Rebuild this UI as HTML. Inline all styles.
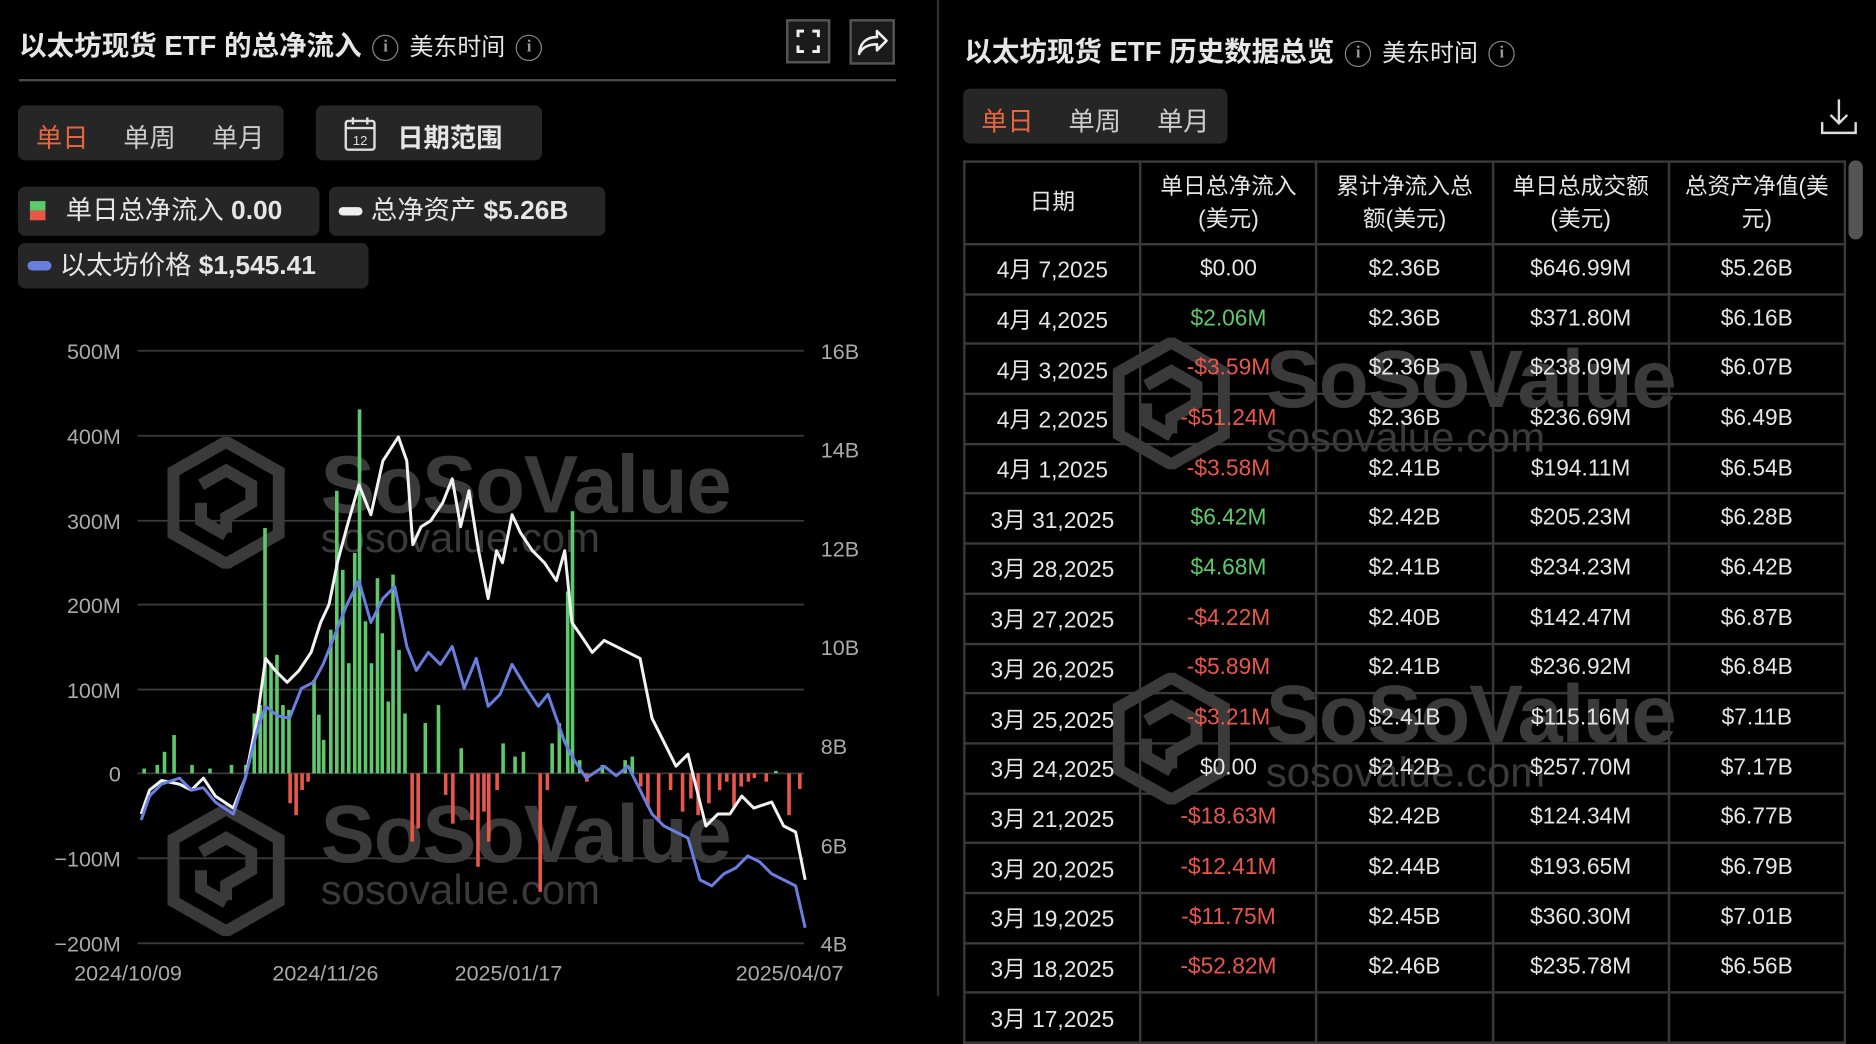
<!DOCTYPE html>
<html><head><meta charset="utf-8"><style>
html,body{margin:0;padding:0;background:#000;overflow:hidden}
body{width:1876px;height:996px}
#w{position:absolute;left:0;top:0;width:1568px;height:832px;transform:scale(1.19643,1.19712);transform-origin:0 0;font-family:"Liberation Sans","Noto Sans CJK SC",sans-serif;color:#e6e6e6}
.a{position:absolute;white-space:nowrap}
.seg{position:absolute;background:#262626;border-radius:6px}
.chip{position:absolute;background:#262626;border-radius:6px;font-size:22px;line-height:40px}
.info{display:inline-block;width:20px;height:20px;border:1.5px solid #888;border-radius:50%;font-size:14px;line-height:20px;text-align:center;color:#999;vertical-align:middle;font-family:"Liberation Serif",serif;margin:0 9px}
table{position:absolute;left:805px;top:134px;border-collapse:collapse;font-size:19px;color:#e6e6e6;table-layout:fixed;width:738px}
td{border:2px solid #3a3a3a;text-align:center;height:39.7px;padding:0}
th{border:2px solid #3a3a3a;font-weight:normal;height:67px;line-height:27px;padding:0;font-size:19px;overflow:hidden}
.g{color:#5ec96a}.r{color:#e8574a}
.wm{position:absolute;color:#3a3a3a;font-weight:bold;font-size:68px;letter-spacing:-1px}
.wm2{position:absolute;color:#3a3a3a;font-size:35px}
</style></head><body><div id="w">
<div class="a" style="left:16px;top:19px;font-size:23px;font-weight:bold">以太坊现货 ETF 的总净流入<span class="info">i</span><span style="font-weight:normal;font-size:20px">美东时间</span><span class="info">i</span></div>
<div class="a" style="left:657px;top:16px;width:37px;height:37px;border:2px solid #555;box-sizing:border-box;background:#1a1a1a">
<svg width="33" height="33" viewBox="0 0 33 33"><path d="M8 13V8h5M20 8h5v5M25 20v5h-5M13 25H8v-5" stroke="#eee" stroke-width="2.5" fill="none"/></svg></div>
<div class="a" style="left:710px;top:16px;width:38px;height:38px;border:2px solid #555;box-sizing:border-box;background:#1a1a1a">
<svg width="34" height="34" viewBox="0 0 34 34"><path d="M6 27C7 17 13 13 21 13V8l8 8-8 8v-5C14 19 9 21 6 27Z" stroke="#eee" stroke-width="2.2" fill="none" stroke-linejoin="round"/></svg></div>
<div class="a" style="left:16px;top:66px;width:733px;height:2px;background:#4a4a4a"></div>
<div class="seg" style="left:15px;top:88px;width:222px;height:46px"></div>
<div class="a" style="left:30px;top:98px;font-size:22px;color:#e8663d">单日</div>
<div class="a" style="left:103px;top:98px;font-size:22px;color:#ccc">单周</div>
<div class="a" style="left:177px;top:98px;font-size:22px;color:#ccc">单月</div>
<div class="seg" style="left:264px;top:88px;width:189px;height:46px"></div>
<svg class="a" style="left:286px;top:96px" width="30" height="32" viewBox="0 0 30 32"><rect x="3" y="5" width="24" height="24" rx="2" fill="none" stroke="#ddd" stroke-width="2"/><path d="M3 11h24M9 2v6M21 2v6" stroke="#ddd" stroke-width="2"/><text x="15" y="25" font-size="11" fill="#ddd" text-anchor="middle" font-family="Liberation Sans">12</text></svg>
<div class="a" style="left:332px;top:98px;font-size:22px;font-weight:bold">日期范围</div>
<div class="chip" style="left:15px;top:156px;width:252px;height:41px"><span style="position:absolute;left:10px;top:12px;width:13px;height:8px;background:#5ec96a"></span><span style="position:absolute;left:10px;top:20px;width:13px;height:8px;background:#e8574a"></span><span style="position:absolute;left:40px">单日总净流入 <b>0.00</b></span></div>
<div class="chip" style="left:275px;top:156px;width:231px;height:41px"><span style="position:absolute;left:8px;top:17px;width:20px;height:7px;border-radius:4px;background:#eee"></span><span style="position:absolute;left:35px">总净资产 <b>$5.26B</b></span></div>
<div class="chip" style="left:15px;top:203px;width:293px;height:38px;line-height:38px"><span style="position:absolute;left:8px;top:15px;width:20px;height:8px;border-radius:4px;background:#6a7ee0"></span><span style="position:absolute;left:35px">以太坊价格 <b>$1,545.41</b></span></div>
<svg class="a" style="left:140px;top:365px" width="98" height="110" viewBox="0 0 98 110"><path d="M49 4L93 29V81L49 106L5 81V29Z" fill="none" stroke="#3a3a3a" stroke-width="10"/><path d="M28 40L49 28L70 40V55L49 67V80M28 55V70L49 82" fill="none" stroke="#3a3a3a" stroke-width="10"/></svg>
<div class="wm" style="left:268px;top:366px">SoSoValue</div>
<div class="wm2" style="left:268px;top:430px">sosovalue.com</div>
<svg class="a" style="left:140px;top:672px" width="98" height="110" viewBox="0 0 98 110"><path d="M49 4L93 29V81L49 106L5 81V29Z" fill="none" stroke="#3a3a3a" stroke-width="10"/><path d="M28 40L49 28L70 40V55L49 67V80M28 55V70L49 82" fill="none" stroke="#3a3a3a" stroke-width="10"/></svg>
<div class="wm" style="left:268px;top:658px">SoSoValue</div>
<div class="wm2" style="left:268px;top:724px">sosovalue.com</div>
<svg class="a" style="left:0;top:0" width="780" height="832" font-family="Liberation Sans" font-size="18" fill="#aaa">
<g stroke="#3a3a3a" stroke-width="1.5"><line x1="115" x2="672" y1="293" y2="293"/><line x1="115" x2="672" y1="364" y2="364"/><line x1="115" x2="672" y1="435" y2="435"/><line x1="115" x2="672" y1="505" y2="505"/><line x1="115" x2="672" y1="576" y2="576"/><line x1="115" x2="672" y1="646" y2="646"/><line x1="115" x2="672" y1="717" y2="717"/><line x1="115" x2="672" y1="788" y2="788"/></g>
<g text-anchor="end"><text x="101" y="300">500M</text><text x="101" y="371">400M</text><text x="101" y="442">300M</text><text x="101" y="512">200M</text><text x="101" y="583">100M</text><text x="101" y="653">0</text><text x="101" y="724">−100M</text><text x="101" y="795">−200M</text></g>
<g><text x="686" y="300">16B</text><text x="686" y="382">14B</text><text x="686" y="465">12B</text><text x="686" y="547">10B</text><text x="686" y="630">8B</text><text x="686" y="713">6B</text><text x="686" y="795">4B</text></g>
<g text-anchor="middle"><text x="107" y="819">2024/10/09</text><text x="272" y="819">2024/11/26</text><text x="425" y="819">2025/01/17</text><text x="660" y="819">2025/04/07</text></g>
<g fill="#5ec96a">
<rect x="119" y="642" width="3" height="4"/><rect x="130" y="639" width="3" height="7"/><rect x="136" y="628" width="3" height="18"/><rect x="144" y="614" width="3" height="32"/><rect x="159" y="639" width="3" height="7"/><rect x="174" y="642" width="3" height="4"/><rect x="192" y="639" width="3" height="7"/><rect x="204" y="639" width="3" height="7"/><rect x="211" y="596" width="3" height="50"/><rect x="216" y="589" width="3" height="57"/><rect x="220" y="441" width="3" height="205"/><rect x="225" y="554" width="3" height="92"/><rect x="230" y="547" width="3" height="99"/><rect x="235" y="589" width="3" height="57"/><rect x="240" y="593" width="3" height="53"/><rect x="261" y="568" width="3" height="78"/><rect x="265" y="597" width="3" height="49"/><rect x="269" y="618" width="3" height="28"/><rect x="275" y="526" width="3" height="120"/><rect x="280" y="410" width="3" height="236"/><rect x="285" y="476" width="3" height="170"/><rect x="290" y="554" width="3" height="92"/><rect x="295" y="462" width="3" height="184"/><rect x="299" y="342" width="3" height="304"/><rect x="304" y="519" width="3" height="127"/><rect x="309" y="554" width="3" height="92"/><rect x="314" y="483" width="3" height="163"/><rect x="318" y="529" width="3" height="117"/><rect x="323" y="586" width="3" height="60"/><rect x="327" y="480" width="3" height="166"/><rect x="332" y="543" width="3" height="103"/><rect x="337" y="596" width="3" height="50"/><rect x="354" y="604" width="3" height="42"/><rect x="365" y="589" width="3" height="57"/><rect x="384" y="625" width="3" height="21"/><rect x="419" y="621" width="3" height="25"/><rect x="429" y="632" width="3" height="14"/><rect x="436" y="628" width="3" height="18"/><rect x="460" y="621" width="3" height="25"/><rect x="466" y="604" width="3" height="42"/><rect x="473" y="494" width="3" height="152"/><rect x="477" y="427" width="3" height="219"/><rect x="483" y="635" width="3" height="11"/><rect x="502" y="639" width="3" height="7"/><rect x="521" y="635" width="3" height="11"/><rect x="527" y="632" width="3" height="14"/><rect x="647" y="644" width="3" height="2"/></g>
<g fill="#e8574a">
<rect x="241" y="646" width="3" height="25"/><rect x="246" y="646" width="3" height="35"/><rect x="251" y="646" width="3" height="14"/><rect x="256" y="646" width="3" height="7"/><rect x="343" y="646" width="3" height="57"/><rect x="348" y="646" width="3" height="46"/><rect x="371" y="646" width="3" height="18"/><rect x="377" y="646" width="3" height="42"/><rect x="393" y="646" width="3" height="39"/><rect x="398" y="646" width="3" height="78"/><rect x="403" y="646" width="3" height="32"/><rect x="407" y="646" width="3" height="57"/><rect x="414" y="646" width="3" height="14"/><rect x="450" y="646" width="3" height="99"/><rect x="456" y="646" width="3" height="14"/><rect x="489" y="646" width="3" height="7"/><rect x="534" y="646" width="3" height="11"/><rect x="540" y="646" width="3" height="28"/><rect x="549" y="646" width="3" height="39"/><rect x="559" y="646" width="3" height="14"/><rect x="569" y="646" width="3" height="32"/><rect x="576" y="646" width="3" height="21"/><rect x="582" y="646" width="3" height="35"/><rect x="591" y="646" width="3" height="25"/><rect x="600" y="646" width="3" height="14"/><rect x="606" y="646" width="3" height="7"/><rect x="612" y="646" width="3" height="28"/><rect x="618" y="646" width="3" height="11"/><rect x="624" y="646" width="3" height="7"/><rect x="629" y="646" width="3" height="4"/><rect x="639" y="646" width="3" height="7"/><rect x="658" y="646" width="3" height="35"/><rect x="667" y="646" width="3" height="13"/></g>
<polyline fill="none" stroke="#f2f2f2" stroke-width="2.5" stroke-linejoin="round" points="118,680 125,660 135,652 150,655 160,660 170,650 180,665 195,675 205,650 215,600 222,550 230,560 240,570 250,560 260,545 268,520 275,505 282,470 290,440 300,405 310,430 320,385 333,365 340,385 345,455 352,440 360,435 370,420 378,400 385,440 392,410 400,460 408,500 415,460 420,470 428,430 435,445 445,460 455,470 465,485 472,460 478,520 485,530 495,545 505,535 515,540 525,545 535,550 545,600 555,620 565,640 575,630 585,670 590,690 600,680 610,680 620,665 630,675 645,670 655,690 665,695 673,735"/>
<polyline fill="none" stroke="#6a7ee0" stroke-width="2.5" stroke-linejoin="round" points="118,685 125,665 135,655 150,650 160,660 170,658 180,670 195,680 205,650 215,610 222,590 232,598 242,600 252,575 262,570 270,555 280,530 290,505 300,485 310,520 320,500 330,490 340,540 348,560 358,545 368,555 378,540 388,575 398,550 408,590 418,580 428,555 440,575 450,590 458,580 465,600 472,620 480,635 490,650 505,640 515,648 525,640 535,660 545,680 555,690 565,695 575,700 585,735 595,740 605,730 615,725 625,715 635,720 645,730 655,735 665,740 673,775"/>
</svg>
<div class="a" style="left:783px;top:0;width:2px;height:832px;background:#2e2e2e"></div>
<div class="a" style="left:806px;top:24px;font-size:23px;font-weight:bold">以太坊现货 ETF 历史数据总览<span class="info">i</span><span style="font-weight:normal;font-size:20px">美东时间</span><span class="info">i</span></div>
<div class="seg" style="left:805px;top:74px;width:221px;height:46px"></div>
<div class="a" style="left:820px;top:84px;font-size:22px;color:#e8663d">单日</div>
<div class="a" style="left:893px;top:84px;font-size:22px;color:#ccc">单周</div>
<div class="a" style="left:967px;top:84px;font-size:22px;color:#ccc">单月</div>
<svg class="a" style="left:1520px;top:80px" width="34" height="34" viewBox="0 0 34 34"><path d="M17 3v20M10 16l7 7 7-7M3 22v9h28v-9" fill="none" stroke="#ddd" stroke-width="2"/></svg>
<div class="wm" style="left:1058px;top:278px">SoSoValue</div>
<div class="wm2" style="left:1058px;top:346px">sosovalue.com</div>
<div class="wm" style="left:1058px;top:558px">SoSoValue</div>
<div class="wm2" style="left:1058px;top:626px">sosovalue.com</div>
<svg class="a" style="left:930px;top:282px" width="98" height="110" viewBox="0 0 98 110"><path d="M49 4L93 29V81L49 106L5 81V29Z" fill="none" stroke="#3a3a3a" stroke-width="10"/><path d="M28 40L49 28L70 40V55L49 67V80M28 55V70L49 82" fill="none" stroke="#3a3a3a" stroke-width="10"/></svg>
<svg class="a" style="left:930px;top:562px" width="98" height="110" viewBox="0 0 98 110"><path d="M49 4L93 29V81L49 106L5 81V29Z" fill="none" stroke="#3a3a3a" stroke-width="10"/><path d="M28 40L49 28L70 40V55L49 67V80M28 55V70L49 82" fill="none" stroke="#3a3a3a" stroke-width="10"/></svg>
<table>
<tr><th>日期</th><th>单日总净流入<br>(美元)</th><th>累计净流入总<br>额(美元)</th><th>单日总成交额<br>(美元)</th><th>总资产净值(美<br>元)</th></tr>
<tr><td>4月 7,2025</td><td>$0.00</td><td>$2.36B</td><td>$646.99M</td><td>$5.26B</td></tr>
<tr><td>4月 4,2025</td><td class="g">$2.06M</td><td>$2.36B</td><td>$371.80M</td><td>$6.16B</td></tr>
<tr><td>4月 3,2025</td><td class="r">-$3.59M</td><td>$2.36B</td><td>$238.09M</td><td>$6.07B</td></tr>
<tr><td>4月 2,2025</td><td class="r">-$51.24M</td><td>$2.36B</td><td>$236.69M</td><td>$6.49B</td></tr>
<tr><td>4月 1,2025</td><td class="r">-$3.58M</td><td>$2.41B</td><td>$194.11M</td><td>$6.54B</td></tr>
<tr><td>3月 31,2025</td><td class="g">$6.42M</td><td>$2.42B</td><td>$205.23M</td><td>$6.28B</td></tr>
<tr><td>3月 28,2025</td><td class="g">$4.68M</td><td>$2.41B</td><td>$234.23M</td><td>$6.42B</td></tr>
<tr><td>3月 27,2025</td><td class="r">-$4.22M</td><td>$2.40B</td><td>$142.47M</td><td>$6.87B</td></tr>
<tr><td>3月 26,2025</td><td class="r">-$5.89M</td><td>$2.41B</td><td>$236.92M</td><td>$6.84B</td></tr>
<tr><td>3月 25,2025</td><td class="r">-$3.21M</td><td>$2.41B</td><td>$115.16M</td><td>$7.11B</td></tr>
<tr><td>3月 24,2025</td><td>$0.00</td><td>$2.42B</td><td>$257.70M</td><td>$7.17B</td></tr>
<tr><td>3月 21,2025</td><td class="r">-$18.63M</td><td>$2.42B</td><td>$124.34M</td><td>$6.77B</td></tr>
<tr><td>3月 20,2025</td><td class="r">-$12.41M</td><td>$2.44B</td><td>$193.65M</td><td>$6.79B</td></tr>
<tr><td>3月 19,2025</td><td class="r">-$11.75M</td><td>$2.45B</td><td>$360.30M</td><td>$7.01B</td></tr>
<tr><td>3月 18,2025</td><td class="r">-$52.82M</td><td>$2.46B</td><td>$235.78M</td><td>$6.56B</td></tr>
<tr><td>3月 17,2025</td><td></td><td></td><td></td><td></td></tr>
</table>
<div class="a" style="left:1545px;top:134px;width:12px;height:66px;border-radius:6px;background:#555"></div>
</div></body></html>
